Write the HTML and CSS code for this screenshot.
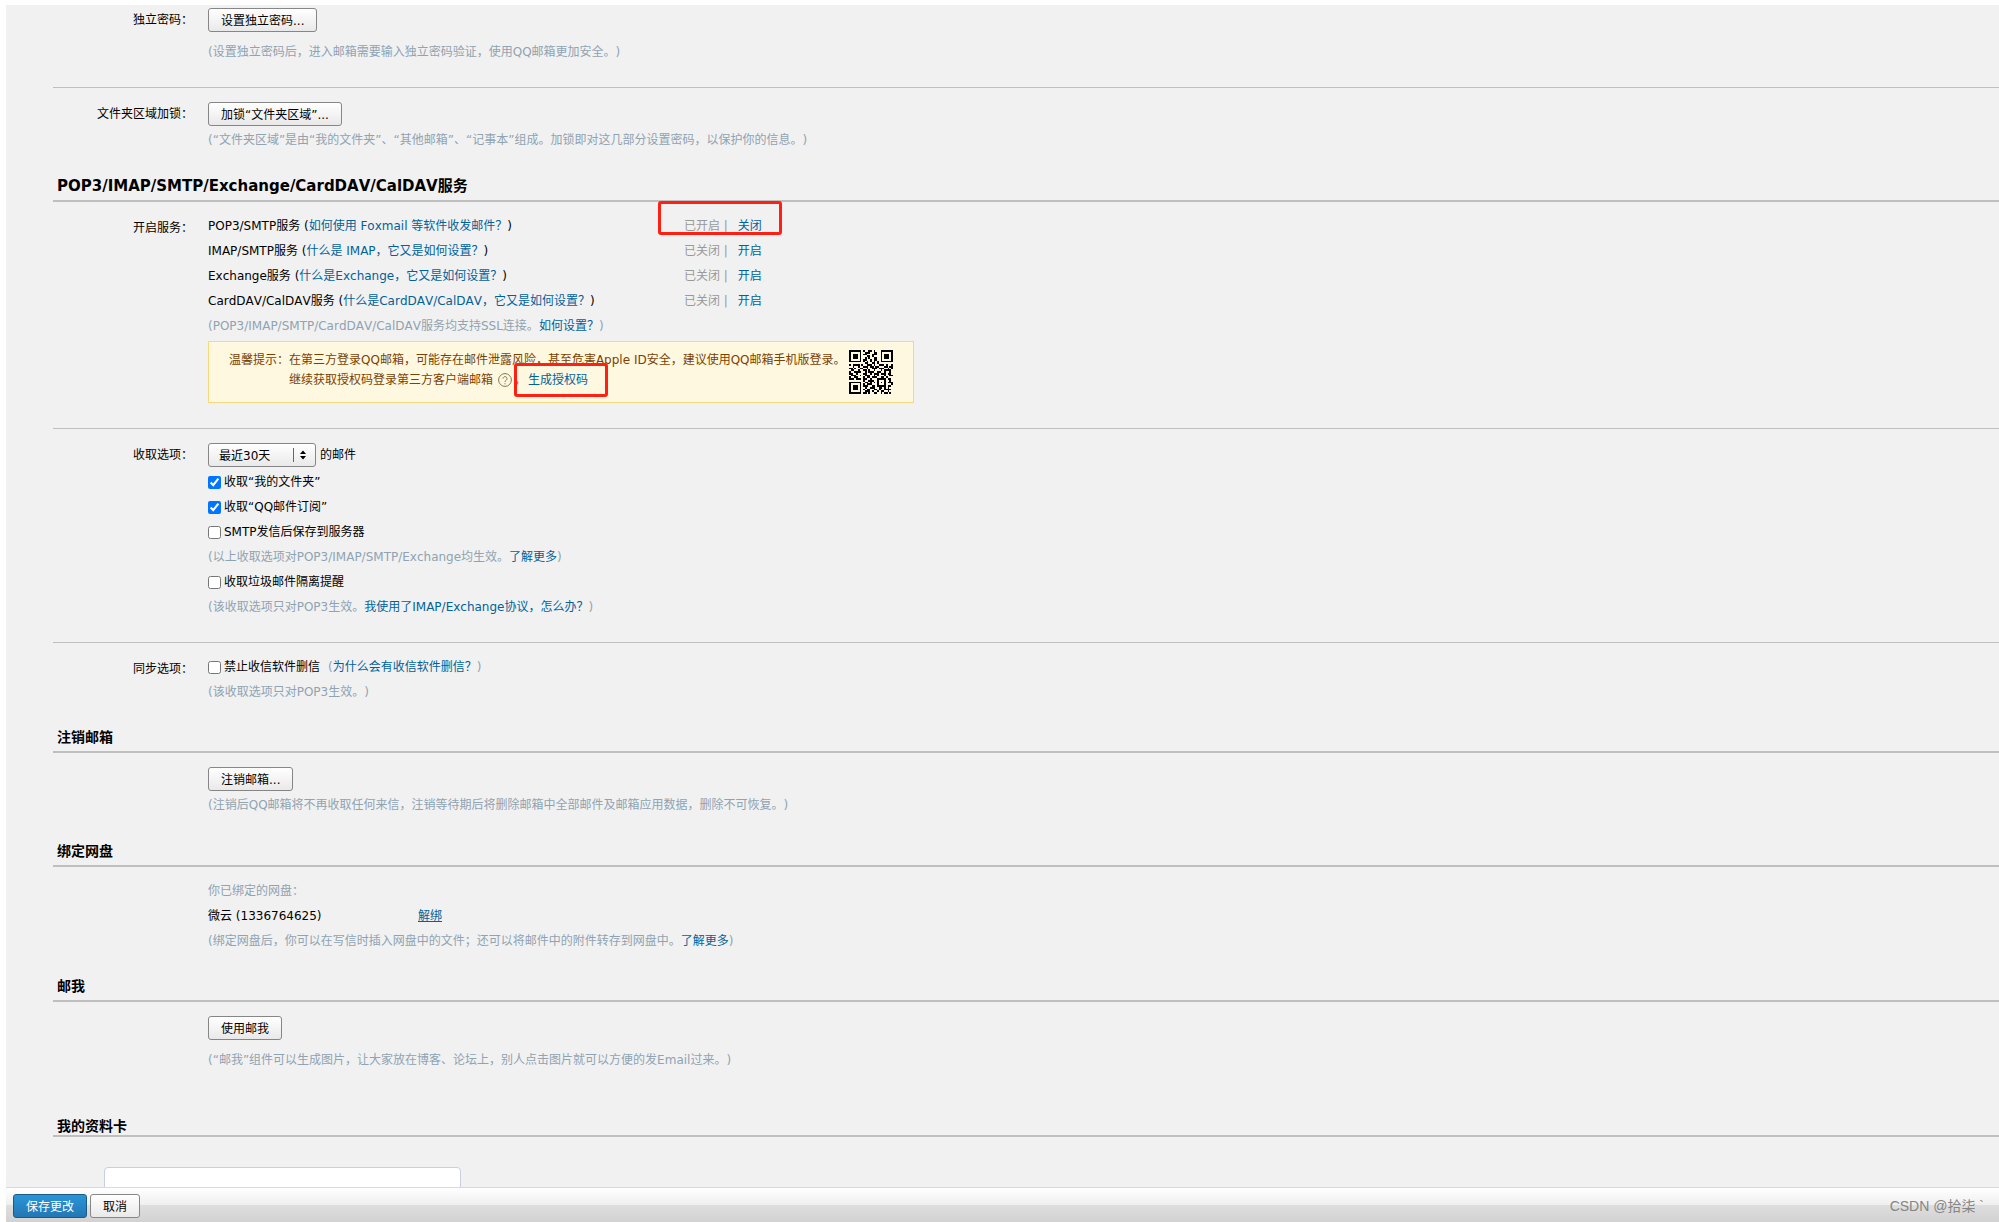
FILE: index.html
```
<!DOCTYPE html>
<html lang="zh-CN">
<head>
    <meta charset="utf-8">
    <title>邮箱设置 - 帐户</title>
    <link rel="stylesheet" href="styles.css">
</head>
<body>
<form class="page" onsubmit="return false">
    <main class="settings">
        <div class="row">
            <div class="label">独立密码：</div>
            <div class="field">
                <button type="button" class="btn">设置独立密码...</button>
                <p class="hint hint-far">(设置独立密码后，进入邮箱需要输入独立密码验证，使用QQ邮箱更加安全。)</p>
            </div>
        </div>

        <div class="row row-line">
            <div class="label">文件夹区域加锁：</div>
            <div class="field">
                <button type="button" class="btn">加锁“文件夹区域”...</button>
                <p class="hint hint-near">(“文件夹区域”是由“我的文件夹”、“其他邮箱”、“记事本”组成。加锁即对这几部分设置密码，以保护你的信息。)</p>
            </div>
        </div>

        <h2 class="title title-service">POP3/IMAP/SMTP/Exchange/CardDAV/CalDAV服务</h2>
        <div class="row row-text row-services">
            <div class="label">开启服务：</div>
            <div class="field">
                <div class="service">
                    <div class="service-name">POP3/SMTP服务 (<a href="#">如何使用 Foxmail 等软件收发邮件？</a>)</div>
                    <div class="service-status">已开启 |<a href="#">关闭</a><span class="mark mark-status"></span></div>
                </div>
                <div class="service">
                    <div class="service-name">IMAP/SMTP服务 (<a href="#">什么是 IMAP，它又是如何设置？</a>)</div>
                    <div class="service-status">已关闭 |<a href="#">开启</a></div>
                </div>
                <div class="service">
                    <div class="service-name">Exchange服务 (<a href="#">什么是Exchange，它又是如何设置？</a>)</div>
                    <div class="service-status">已关闭 |<a href="#">开启</a></div>
                </div>
                <div class="service">
                    <div class="service-name">CardDAV/CalDAV服务 (<a href="#">什么是CardDAV/CalDAV，它又是如何设置？</a>)</div>
                    <div class="service-status">已关闭 |<a href="#">开启</a></div>
                </div>
                <p class="hint">(POP3/IMAP/SMTP/CardDAV/CalDAV服务均支持SSL连接。<a href="#">如何设置？</a>)</p>

                <div class="tip">
                    <div>温馨提示：</div>
                    <div class="tip-text">
                        <p>在第三方登录QQ邮箱，可能存在邮件泄露风险，甚至危害Apple ID安全，建议使用QQ邮箱手机版登录。</p>
                        <p>继续获取授权码登录第三方客户端邮箱<svg class="help" viewBox="0 0 14 14"><circle cx="7" cy="7" r="6.4"/><path d="M5 5.6a2 2 0 1 1 3.3 1.5C7.4 7.7 7 8 7 9M7 10.2v1.1"/></svg>。<span class="tip-code"><a href="#">生成授权码</a><span class="mark mark-code"></span></span></p>
                    </div>
                    <svg class="qrcode" viewBox="0 0 25 25" shape-rendering="crispEdges">
                        <path fill="none" stroke="#000" d="
                            M0 .5h7m1 0h1m2 0h2m1 0h1m3 0h7
                            M0 1.5h1m5 0h1m2 0h3m2 0h2m2 0h1m5 0h1
                            M0 2.5h1m1 0h3m1 0h1m1 0h2m3 0h3m2 0h1m1 0h3m1 0h1
                            M0 3.5h1m1 0h3m1 0h1m3 0h2m1 0h1m4 0h1m1 0h3m1 0h1
                            M0 4.5h1m1 0h3m1 0h1m2 0h1m1 0h1m2 0h2m2 0h1m1 0h3m1 0h1
                            M0 5.5h1m5 0h1m1 0h2m2 0h1m1 0h2m2 0h1m5 0h1
                            M0 6.5h7m1 0h1m1 0h1m1 0h1m1 0h1m1 0h1m1 0h7
                            M9 7.5h2m2 0h2m1 0h1
                            M0 8.5h1m1 0h4m1 0h1m2 0h3m1 0h1m2 0h3m1 0h1m2 0h1
                            M2 9.5h1m2 0h1m2 0h3m1 0h2m1 0h2m3 0h2m1 0h2
                            M0 10.5h2m1 0h1m2 0h2m2 0h1m2 0h3m1 0h3m2 0h1m1 0h1
                            M1 11.5h2m2 0h1m2 0h2m1 0h1m2 0h1m3 0h1m1 0h4
                            M0 12.5h1m2 0h4m2 0h1m1 0h3m2 0h2m2 0h1m2 0h1
                            M0 13.5h2m2 0h1m3 0h2m2 0h1m1 0h3m1 0h3m1 0h2
                            M1 14.5h3m2 0h1m2 0h3m2 0h1m1 0h1m3 0h1m2 0h2
                            M0 15.5h1m2 0h2m3 0h1m1 0h2m1 0h3m2 0h2m1 0h1
                            M0 16.5h3m1 0h3m1 0h2m2 0h1m3 0h5m1 0h2
                            M8 17.5h1m2 0h3m2 0h1m3 0h1m2 0h1
                            M0 18.5h7m2 0h2m1 0h1m1 0h1m1 0h1m1 0h1m1 0h1m1 0h3
                            M0 19.5h1m5 0h1m1 0h1m1 0h3m3 0h1m3 0h1m3 0h1
                            M0 20.5h1m1 0h3m1 0h1m1 0h3m2 0h2m1 0h5m1 0h2
                            M0 21.5h1m1 0h3m1 0h1m2 0h1m2 0h3m2 0h2m1 0h1m1 0h1
                            M0 22.5h1m1 0h3m1 0h1m1 0h1m1 0h2m2 0h2m1 0h1m2 0h4
                            M0 23.5h1m5 0h1m2 0h3m1 0h1m2 0h1m1 0h2m2 0h1
                            M0 24.5h7m1 0h2m1 0h1m2 0h2m2 0h1m1 0h2m1 0h1"/>
                    </svg>
                </div>
            </div>
        </div>

        <div class="row row-line">
            <div class="label">收取选项：</div>
            <div class="field">
                <div class="range">
                    <div class="select-box">
                        <select id="range">
                            <option>最近30天</option>
                            <option>全部</option>
                        </select>
                        <svg class="select-arrow" viewBox="0 0 20 14"><path d="M.5 0v14" stroke="#666"/><path d="M7 6l3-3.5L13 6zM7 8l3 3.5L13 8z"/></svg>
                    </div>
                    <label for="range">的邮件</label>
                </div>
                <div class="option"><input type="checkbox" id="folder" checked><label for="folder">收取“我的文件夹”</label></div>
                <div class="option"><input type="checkbox" id="feed" checked><label for="feed">收取“QQ邮件订阅”</label></div>
                <div class="option"><input type="checkbox" id="smtp"><label for="smtp">SMTP发信后保存到服务器</label></div>
                <p class="hint">(以上收取选项对POP3/IMAP/SMTP/Exchange均生效。<a href="#">了解更多</a>)</p>
                <div class="option"><input type="checkbox" id="spam"><label for="spam">收取垃圾邮件隔离提醒</label></div>
                <p class="hint">(该收取选项只对POP3生效。<a href="#">我使用了IMAP/Exchange协议，怎么办？</a>)</p>
            </div>
        </div>

        <div class="row row-line row-text">
            <div class="label">同步选项：</div>
            <div class="field">
                <div class="option"><input type="checkbox" id="nodelete"><label for="nodelete">禁止收信软件删信</label><span class="hint option-more">(<a href="#">为什么会有收信软件删信？</a>)</span></div>
                <p class="hint">(该收取选项只对POP3生效。)</p>
            </div>
        </div>

        <h2 class="title">注销邮箱</h2>
        <div class="row row-btn">
            <div class="label"></div>
            <div class="field">
                <button type="button" class="btn">注销邮箱...</button>
                <p class="hint hint-near">(注销后QQ邮箱将不再收取任何来信，注销等待期后将删除邮箱中全部邮件及邮箱应用数据，删除不可恢复。)</p>
            </div>
        </div>

        <h2 class="title">绑定网盘</h2>
        <div class="row row-text">
            <div class="label"></div>
            <div class="field">
                <p class="hint">你已绑定的网盘：</p>
                <div class="disk"><span class="disk-name">微云 (1336764625)</span><a class="unbind" href="#">解绑</a></div>
                <p class="hint">(绑定网盘后，你可以在写信时插入网盘中的文件；还可以将邮件中的附件转存到网盘中。<a href="#">了解更多</a>)</p>
            </div>
        </div>

        <h2 class="title">邮我</h2>
        <div class="row row-btn">
            <div class="label"></div>
            <div class="field">
                <button type="button" class="btn">使用邮我</button>
                <p class="hint hint-far">(“邮我”组件可以生成图片，让大家放在博客、论坛上，别人点击图片就可以方便的发Email过来。)</p>
            </div>
        </div>

        <h2 class="title title-card">我的资料卡</h2>
        <div class="card"></div>
    </main>

    <footer class="toolbar">
        <button type="submit" class="btn btn-primary">保存更改</button>
        <button type="button" class="btn">取消</button>
        <span class="watermark">CSDN @拾柒 `</span>
    </footer>
</form>
</body>
</html>
```

FILE: styles.css
```
* { box-sizing: border-box; }
body {
    margin: 0;
    background: #fff;
    color: #000;
    font: 12px/25px "DejaVu Sans", "Noto Sans CJK SC", sans-serif;
    font-kerning: none;
    text-spacing-trim: space-all;
}
p { margin: 0; }
a { color: #00629b; text-decoration: none; }
a:hover { text-decoration: underline; }

.page {
    display: flex;
    flex-direction: column;
    height: 100vh;
    padding: 5px 0 0 6px;
}
.settings {
    flex: 1;
    min-height: 0;
    overflow: hidden;
    padding: 3px 0 0 47px;
    background: #f1f1f1;
}

/* rows */
.row { display: flex; gap: 22px; }
.row-line {
    margin-top: 22px;
    padding-top: 14px;
    border-top: 1px solid #bfbfbf;
}
.row-btn { padding-top: 14px; }
.row-text { padding-top: 12px; }
.row-text .label { padding-top: 2px; }
.row-text + .title { margin-top: 18px; }
.row-services { padding-bottom: 3px; }
.label {
    flex: 0 0 140px;
    margin-right: -7px;
    text-align: right;
}
.field { flex: 1; min-width: 0; }
.title {
    margin: 19px 0 0;
    padding-left: 4px;
    border-bottom: 2px solid #bfbfbf;
    font-size: 14px;
    line-height: 28px;
}
.title-service { font-size: 15px; }
.title-card { margin-top: 44px; line-height: 18px; }
.hint { color: #8fa3b1; }
.hint-near { margin-top: 2px; }
.hint-far { margin-top: 8px; }

/* buttons */
.btn {
    display: block;
    height: 24px;
    padding: 1px 12px 0;
    border: 1px solid #868686;
    border-radius: 3px;
    background: linear-gradient(#fff, #e9e9e9);
    color: #000;
    font: inherit;
    font-kerning: none;
    line-height: 22px;
    cursor: pointer;
}
.btn-primary {
    border-color: #1c5a85;
    background: linear-gradient(#2a95d8, #2377b3);
    color: #fff;
}

/* services */
.service { display: flex; }
.service-name { flex: 0 0 476px; }
.service-status { position: relative; color: #999; }
.service-status a { margin-left: 10px; }
.tip {
    display: flex;
    width: 706px;
    margin-top: 2px;
    padding: 8px 20px;
    border: 1px solid #f5d97b;
    background: #fff8e1;
    color: #7b4100;
    line-height: 20px;
}
.tip-text { flex: 1; white-space: nowrap; }
.tip-code { position: relative; margin-left: 2px; }
.help {
    width: 14px;
    height: 14px;
    margin: 0 2px 0 5px;
    vertical-align: -3px;
    fill: none;
    stroke: #857650;
}
.qrcode { flex: none; width: 44px; height: 44px; }
.mark {
    position: absolute;
    height: 34px;
    border: 3px solid #ff2013;
    border-radius: 3px;
    pointer-events: none;
}
.mark-status { left: -26px; top: -13px; width: 124px; }
.mark-code { left: -14px; top: -10px; width: 94px; }

/* receive options */
.range { display: flex; gap: 4px; margin-bottom: 3px; line-height: 24px; }
.select-box { position: relative; }
.select-box select {
    display: block;
    appearance: none;
    width: 108px;
    height: 24px;
    padding: 1px 24px 0 10px;
    border: 1px solid #868686;
    border-radius: 3px;
    background: linear-gradient(#fff, #e9e9e9);
    color: #000;
    font: inherit;
    line-height: 22px;
}
.select-arrow {
    position: absolute;
    right: 3px;
    top: 5px;
    width: 20px;
    height: 14px;
    pointer-events: none;
}
.option { display: flex; align-items: center; }
.option input { width: 13px; height: 13px; margin: 0 3px 0 0; }
.option-more { margin-left: 8px; }

.disk { display: flex; }
.disk-name { flex: 0 0 210px; }
.unbind { text-decoration: underline; }

.card {
    width: 357px;
    height: 160px;
    margin: 30px 0 0 51px;
    border: 1px solid #c8cfe0;
    border-radius: 4px;
    background: #fff;
}

/* bottom bar */
.toolbar {
    display: flex;
    flex: none;
    gap: 3px;
    padding: 6px 15px 4px 7px;
    border-top: 1px solid #d9d9d9;
    background: linear-gradient(#fff, #efefef 50%, #dedede 50%, #d2d2d2);
}
.watermark {
    margin-left: auto;
    color: #858585;
    font: 14px/24px "Liberation Sans", "Noto Sans CJK SC", sans-serif;
}
```
